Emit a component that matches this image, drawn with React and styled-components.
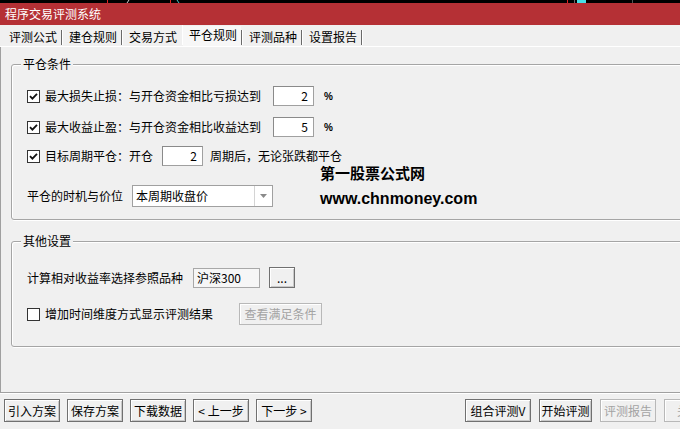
import React from 'react';
import styled, { createGlobalStyle } from 'styled-components';

const Global = createGlobalStyle`
  html, body { margin: 0; padding: 0; background: #f0f0f0; }
  body {
    font-family: "Noto Sans CJK SC", "Liberation Sans", sans-serif;
    font-size: 12px;
    color: #000;
  }
  * { box-sizing: border-box; }
`;

const Window = styled.div`
  width: 680px;
  height: 429px;
  overflow: hidden;
  display: flex;
  flex-direction: column;
  background: #f0f0f0;
  position: relative;
`;

const TopStrip = styled.svg`
  display: block;
  flex-shrink: 0;
`;

const TitleBar = styled.div`
  height: 22px;
  flex-shrink: 0;
  background: #b53035;
  color: #fff;
  display: flex;
  align-items: center;
  padding-left: 5px;
  font-size: 12px;
  line-height: 16px;
`;

const TabRow = styled.div`
  height: 22px;
  flex-shrink: 0;
  display: flex;
  align-items: flex-end;
  padding-left: 3px;
  border-bottom: 1px solid #fff;
`;

const Tab = styled.div`
  width: 58px;
  height: ${p => (p.$active ? 20 : 18)}px;
  padding: 0 0 ${p => (p.$active ? 3 : 1)}px 6px;
  display: flex;
  align-items: center;
  line-height: 16px;
  font-size: 12px;
  background: ${p => (p.$active ? '#f7f7f7' : 'transparent')};
  white-space: nowrap;
`;

const TabSep = styled.div`
  width: 2px;
  height: ${p => (p.$light ? 20 : 15)}px;
  margin-bottom: 1px;
  background: ${p => (p.$light
    ? 'linear-gradient(to right, #f0f0f0 1px, #ffffff 1px)'
    : 'linear-gradient(to right, #6a6a6a 1px, #ffffff 1px)')};
`;

const Content = styled.div`
  flex: 1;
  border-left: 1px solid #a0a0a0;
  padding-left: 10px;
  display: flex;
  flex-direction: column;
`;

const GroupBox = styled.div`
  margin-top: ${p => p.$mt}px;
  height: ${p => p.$h}px;
  width: 720px;
  flex-shrink: 0;
  border: 1px solid #a5a5a5;
  border-radius: 3px;
  box-shadow: 1px 1px 0 #ffffff, inset 1px 1px 0 #ffffff;
  padding-left: 15px;
  display: flex;
  flex-direction: column;
`;

const GroupTitle = styled.div`
  align-self: flex-start;
  margin: -9px 0 0 -6px;
  padding: 0 2px;
  height: 16px;
  line-height: 16px;
  background: #f0f0f0;
`;

const Row = styled.div`
  display: flex;
  align-items: center;
  height: ${p => p.$h || 20}px;
  margin-top: ${p => p.$mt}px;
  flex-shrink: 0;
`;

const Label = styled.span`
  line-height: 16px;
  white-space: nowrap;
  margin-left: ${p => p.$ml || 0}px;
`;

const CheckBoxBox = styled.span`
  width: 13px;
  height: 13px;
  border: 1px solid #333;
  background: #fff;
  display: inline-flex;
  align-items: center;
  justify-content: center;
  margin-right: 5px;
  flex-shrink: 0;
`;

const CheckBox = ({ checked }) => (
  <CheckBoxBox>
    {checked && (
      <svg width="9" height="9" viewBox="0 0 9 9">
        <path d="M1 4.2 L3.4 6.6 L8 1.8" fill="none" stroke="#111" strokeWidth="1.8" />
      </svg>
    )}
  </CheckBoxBox>
);

const NumBox = styled.div`
  width: 41px;
  height: 20px;
  margin-left: ${p => p.$ml}px;
  border: 1px solid #a0a0a0;
  border-top-color: #8a8a8a;
  border-left-color: #8a8a8a;
  background: #fff;
  display: flex;
  align-items: center;
  justify-content: flex-end;
  padding-right: 5px;
  line-height: 16px;
  flex-shrink: 0;
`;

const Pct = styled.span`
  margin-left: 10px;
  font-size: 10px;
  font-weight: bold;
  font-family: "Liberation Sans", sans-serif;
`;

const Select = styled.div`
  width: 141px;
  height: 22px;
  margin-left: 9px;
  border: 1px solid #a0a0a0;
  background: #fff;
  display: flex;
  align-items: stretch;
  flex-shrink: 0;
`;

const SelectText = styled.div`
  flex: 1;
  padding-left: 3px;
  display: flex;
  align-items: center;
  line-height: 16px;
`;

const SelectArrow = styled.div`
  width: 18px;
  border-left: 1px solid #d4d4d4;
  display: flex;
  align-items: center;
  justify-content: center;
`;

const RefBox = styled.div`
  width: 67px;
  height: 20px;
  margin-left: 10px;
  border: 1px solid #a8a8a8;
  background: #f6f6f6;
  padding-left: 3px;
  display: flex;
  align-items: center;
  line-height: 16px;
  flex-shrink: 0;
`;

const Button = styled.div`
  width: ${p => p.$w}px;
  height: ${p => p.$h || 23}px;
  margin-left: ${p => p.$ml || 0}px;
  flex-shrink: 0;
  border: 1px solid ${p => (p.$disabled ? '#b8b8b8' : '#707070')};
  background: #f0f0f0;
  box-shadow: ${p => (p.$disabled
    ? 'inset 1px 1px 0 #ffffff'
    : 'inset 1px 1px 0 #ffffff, inset -1px -1px 0 #c8c8c8')};
  color: ${p => (p.$disabled ? '#a3a3a3' : '#000')};
  display: flex;
  align-items: center;
  justify-content: center;
  line-height: 16px;
  white-space: nowrap;
  letter-spacing: ${p => p.$ls || 0}px;
`;

const BottomBar = styled.div`
  height: 37px;
  flex-shrink: 0;
  border-top: 1px solid #a0a0a0;
  box-shadow: inset 0 1px 0 #ffffff;
  padding: 6px 0 0 4px;
  display: flex;
  align-items: flex-start;
`;

const ButtonGroup = styled.div`
  display: flex;
  gap: ${p => p.$gap}px;
  margin-left: ${p => p.$ml || 0}px;
  flex-shrink: 0;
`;

const Watermark = styled.div`
  position: absolute;
  left: 320px;
  top: ${p => p.$top}px;
  font-weight: bold;
  font-size: ${p => p.$size}px;
  line-height: 18px;
  color: #000;
  font-family: ${p => (p.$latin ? '"Liberation Sans", sans-serif' : '"Noto Sans CJK SC", sans-serif')};
  white-space: nowrap;
`;

const tabs = ['评测公式', '建仓规则', '交易方式', '平仓规则', '评测品种', '设置报告'];

export default function App() {
  return (
    <Window>
      <Global />
      <TopStrip width="680" height="3" viewBox="0 0 680 3">
        <rect x="0" y="0" width="680" height="3" fill="#000" />
        <rect x="107" y="0" width="1" height="3" fill="#e02020" />
        <line x1="127" y1="3" x2="129" y2="0" stroke="#cfcfcf" strokeWidth="1" />
        <rect x="170" y="0" width="1" height="3" fill="#e02020" />
        <line x1="177" y1="0" x2="179" y2="3" stroke="#40c8c8" strokeWidth="1" />
        <rect x="567" y="0" width="1" height="3" fill="#e02020" />
        <rect x="574" y="0" width="1" height="3" fill="#6a6a6a" />
        <rect x="577" y="0" width="9" height="3" fill="#46e0e8" />
        <rect x="632" y="0" width="1" height="3" fill="#555" />
      </TopStrip>
      <TitleBar>程序交易评测系统</TitleBar>
      <TabRow>
        {tabs.map((t, i) => (
          <React.Fragment key={t}>
            {i === 3 && <TabSep $light />}
            <Tab $active={i === 3}>{t}</Tab>
            {i !== 2 && <TabSep />}
          </React.Fragment>
        ))}
      </TabRow>
      <Content>
        <GroupBox $mt={17} $h={156}>
          <GroupTitle>平仓条件</GroupTitle>
          <Row $mt={14}>
            <CheckBox checked />
            <Label>最大损失止损：与开仓资金相比亏损达到</Label>
            <NumBox $ml={12}>2</NumBox>
            <Pct>%</Pct>
          </Row>
          <Row $mt={11}>
            <CheckBox checked />
            <Label>最大收益止盈：与开仓资金相比收益达到</Label>
            <NumBox $ml={12}>5</NumBox>
            <Pct>%</Pct>
          </Row>
          <Row $mt={9}>
            <CheckBox checked />
            <Label>目标周期平仓：开仓</Label>
            <NumBox $ml={9}>2</NumBox>
            <Label $ml={7}>周期后，无论张跌都平仓</Label>
          </Row>
          <Row $mt={19} $h={22}>
            <Label>平仓的时机与价位</Label>
            <Select>
              <SelectText>本周期收盘价</SelectText>
              <SelectArrow>
                <svg width="7" height="4" viewBox="0 0 7 4">
                  <path d="M0 0 H7 L3.5 4 Z" fill="#8a8a8a" />
                </svg>
              </SelectArrow>
            </Select>
          </Row>
        </GroupBox>
        <GroupBox $mt={21} $h={106}>
          <GroupTitle>其他设置</GroupTitle>
          <Row $mt={18} $h={21}>
            <Label>计算相对收益率选择参照品种</Label>
            <RefBox>沪深300</RefBox>
            <Button $w={26} $h={21} $ml={9}>...</Button>
          </Row>
          <Row $mt={15} $h={22}>
            <CheckBox />
            <Label>增加时间维度方式显示评测结果</Label>
            <Button $w={83} $h={22} $ml={26} $disabled>查看满足条件</Button>
          </Row>
        </GroupBox>
      </Content>
      <BottomBar>
        <ButtonGroup $gap={7}>
          <Button $w={56}>引入方案</Button>
          <Button $w={56}>保存方案</Button>
          <Button $w={56}>下载数据</Button>
          <Button $w={56}>&lt; 上一步</Button>
          <Button $w={56}>下一步 &gt;</Button>
        </ButtonGroup>
        <ButtonGroup $gap={8} $ml={153}>
          <Button $w={66}>组合评测V</Button>
          <Button $w={53}>开始评测</Button>
          <Button $w={56} $disabled>评测报告</Button>
          <Button $w={50} $disabled>关闭</Button>
        </ButtonGroup>
      </BottomBar>
      <Watermark $top={164} $size={15}>第一股票公式网</Watermark>
      <Watermark $top={190} $size={16} $latin>www.chnmoney.com</Watermark>
    </Window>
  );
}
